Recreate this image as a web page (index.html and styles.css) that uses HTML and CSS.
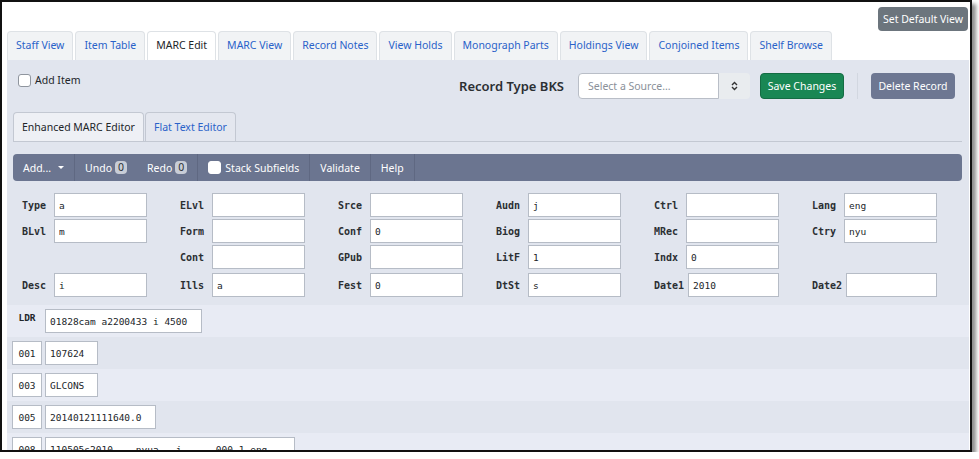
FILE: index.html
```html
<!DOCTYPE html>
<html lang="en">
<head>
    <meta charset="UTF-8">
    <title>MARC Edit</title>
    <link rel="stylesheet" href="styles.css">
</head>
<body>
<div class="frame">
    <div class="topbar">
        <button class="btn btn-grey">Set Default View</button>
    </div>

    <div class="tabs">
        <div class="tab">Staff View</div>
        <div class="tab">Item Table</div>
        <div class="tab active">MARC Edit</div>
        <div class="tab">MARC View</div>
        <div class="tab">Record Notes</div>
        <div class="tab">View Holds</div>
        <div class="tab">Monograph Parts</div>
        <div class="tab">Holdings View</div>
        <div class="tab">Conjoined Items</div>
        <div class="tab">Shelf Browse</div>
    </div>

    <div class="panel">
        <div class="panel-head">
            <label class="check"><input type="checkbox"> Add Item</label>
            <div class="head-right">
                <span class="rec-type">Record Type BKS</span>
                <div class="source">
                    <input type="text" placeholder="Select a Source...">
                    <span class="source-arrows">
                        <svg width="7" height="10" viewBox="0 0 7 10"><path d="M1 4 L3.5 1.5 L6 4 M1 6 L3.5 8.5 L6 6" fill="none" stroke="#333" stroke-width="1.4"/></svg>
                    </span>
                </div>
                <button class="btn btn-green">Save Changes</button>
                <span class="vsep"></span>
                <button class="btn btn-slate">Delete Record</button>
            </div>
        </div>

        <div class="editor">
            <div class="subtabs">
                <div class="subtab active">Enhanced MARC Editor</div>
                <div class="subtab">Flat Text Editor</div>
            </div>

            <div class="toolbar">
                <div class="tool">Add... <span class="caret"></span></div>
                <div class="tool plain">Undo <span class="badge">0</span></div>
                <div class="tool">Redo <span class="badge">0</span></div>
                <div class="tool"><input type="checkbox" class="tb-check"> Stack Subfields</div>
                <div class="tool">Validate</div>
                <div class="tool">Help</div>
            </div>

            <div class="ff">
                <div class="ff-row">
                    <div class="ff-cell"><span>Type</span><input value="a"></div>
                    <div class="ff-cell"><span>ELvl</span><input value=""></div>
                    <div class="ff-cell"><span>Srce</span><input value=""></div>
                    <div class="ff-cell"><span>Audn</span><input value="j"></div>
                    <div class="ff-cell"><span>Ctrl</span><input value=""></div>
                    <div class="ff-cell"><span>Lang</span><input value="eng"></div>
                </div>
                <div class="ff-row">
                    <div class="ff-cell"><span>BLvl</span><input value="m"></div>
                    <div class="ff-cell"><span>Form</span><input value=""></div>
                    <div class="ff-cell"><span>Conf</span><input value="0"></div>
                    <div class="ff-cell"><span>Biog</span><input value=""></div>
                    <div class="ff-cell"><span>MRec</span><input value=""></div>
                    <div class="ff-cell"><span>Ctry</span><input value="nyu"></div>
                </div>
                <div class="ff-row">
                    <div class="ff-cell"></div>
                    <div class="ff-cell"><span>Cont</span><input value=""></div>
                    <div class="ff-cell"><span>GPub</span><input value=""></div>
                    <div class="ff-cell"><span>LitF</span><input value="1"></div>
                    <div class="ff-cell"><span>Indx</span><input value="0"></div>
                    <div class="ff-cell"></div>
                </div>
                <div class="ff-row last">
                    <div class="ff-cell"><span>Desc</span><input value="i"></div>
                    <div class="ff-cell"><span>Ills</span><input value="a"></div>
                    <div class="ff-cell"><span>Fest</span><input value="0"></div>
                    <div class="ff-cell"><span>DtSt</span><input value="s"></div>
                    <div class="ff-cell"><span>Date1</span><input value="2010"></div>
                    <div class="ff-cell"><span>Date2</span><input value=""></div>
                </div>
            </div>
        </div>

        <div class="records">
            <div class="rec">
                <span class="tag-label">LDR</span>
                <input class="val w-ldr" value="01828cam a2200433 i 4500">
            </div>
            <div class="rec">
                <input class="tag" value="001">
                <input class="val w-sm" value="107624">
            </div>
            <div class="rec">
                <input class="tag" value="003">
                <input class="val w-sm" value="GLCONS">
            </div>
            <div class="rec">
                <input class="tag" value="005">
                <input class="val w-md" value="20140121111640.0">
            </div>
            <div class="rec">
                <input class="tag" value="008">
                <input class="val w-lg" value="110505s2010    nyua   j      000 1 eng  ">
            </div>
        </div>
    </div>
</div>
</body>
</html>
```

FILE: styles.css
```css
body {
    margin: 0;
    background-color: #fff;
    font-family: "Noto Sans", sans-serif;
    font-size: 10.5px;
    color: #212529;
}
.frame {
    box-sizing: border-box;
    width: 972px;
    height: 452px;
    border: 2px solid #111;
    padding: 0 1px 0 5px;
    background-color: #fff;
    box-shadow: 4px 4px 4px rgba(0, 0, 0, 0.45);
    overflow: hidden;
}
.topbar {
    display: flex;
    justify-content: flex-end;
    height: 29px;
    padding-top: 5px;
    box-sizing: border-box;
}
.btn {
    font-family: inherit;
    font-size: 10.5px;
    color: #fff;
    border: 1px solid transparent;
    border-radius: 4px;
    cursor: pointer;
    padding: 0 4px;
    white-space: nowrap;
}
.btn-grey {
    background-color: #6c757d;
    height: 24px;
    margin-right: 1px;
}
.btn-green {
    background-color: #198754;
    border-color: #146c43;
    height: 26px;
    width: 84px;
    margin-left: 10px;
}
.btn-slate {
    background-color: #6d7792;
    height: 26px;
    width: 84px;
}
.tabs {
    display: flex;
    gap: 2px;
    height: 29px;
}
.tab {
    padding: 0 8px;
    line-height: 27px;
    background-color: #f1f3f5;
    border: 1px solid #dee2e6;
    border-bottom: none;
    border-radius: 4px 4px 0 0;
    color: #2a62c9;
}
.tab.active {
    background-color: #fff;
    color: #212529;
}
.panel {
    background-color: #e1e5ee;
    height: 400px;
}
.panel-head {
    display: flex;
    justify-content: space-between;
    align-items: flex-start;
    padding: 13px 14px 0 11px;
}
.check {
    display: flex;
    align-items: center;
    gap: 4px;
}
.check input, .tb-check {
    appearance: none;
    width: 13px;
    height: 13px;
    margin: 0;
    border: 1px solid #8f959e;
    border-radius: 3px;
    background-color: #fff;
}
.head-right {
    display: flex;
    align-items: center;
}
.rec-type {
    font-size: 13px;
    font-weight: 600;
    color: #2b2f33;
    margin-right: 14px;
}
.source {
    display: flex;
    height: 26px;
}
.source input {
    box-sizing: border-box;
    width: 141px;
    height: 26px;
    border: 1px solid #b9bec7;
    border-radius: 4px 0 0 4px;
    padding: 0 9px;
    font-family: inherit;
    font-size: 10.5px;
    outline: none;
}
.source input::placeholder {
    color: #8a9099;
}
.source-arrows {
    width: 31px;
    display: flex;
    align-items: center;
    justify-content: center;
    background-color: #e9ecef;
    border-radius: 0 4px 4px 0;
}
.vsep {
    width: 1px;
    height: 26px;
    background-color: #d2d7e0;
    margin: 0 13px;
}
.editor {
    padding: 0 7px 0 6px;
}
.subtabs {
    display: flex;
    gap: 1px;
    margin-top: 13px;
    height: 29px;
    border-bottom: 1px solid #c3c8d2;
}
.subtab {
    padding: 0 8px;
    line-height: 28px;
    border: 1px solid #c3c8d2;
    border-bottom: none;
    border-radius: 4px 4px 0 0;
    color: #2a62c9;
    background-color: #e4e7ef;
}
.subtab.active {
    background-color: #eef0f5;
    color: #212529;
}
.toolbar {
    display: flex;
    align-items: center;
    height: 27px;
    margin-top: 12px;
    background-color: #6b7590;
    border-radius: 4px;
    color: #fff;
}
.tool {
    display: flex;
    align-items: center;
    gap: 3px;
    height: 27px;
    padding: 0 10px;
    border-right: 1px solid #5f6882;
}
.tool.plain {
    border-right: none;
}
.tb-check {
    border-color: #fff;
    margin-right: 1px;
}
.caret {
    width: 0;
    height: 0;
    margin-left: 4px;
    border-left: 3px solid transparent;
    border-right: 3px solid transparent;
    border-top: 3px solid #fff;
}
.badge {
    background-color: #c8cdd7;
    color: #2b2f33;
    border-radius: 4px;
    padding: 0 3px;
    line-height: 13px;
}
.ff {
    display: flex;
    flex-direction: column;
    gap: 2px;
    margin-top: 12px;
    padding-left: 9px;
}
.ff-row {
    display: grid;
    grid-template-columns: repeat(6, 125px);
    column-gap: 33px;
}
.ff-row.last {
    margin-top: 2px;
}
.ff-cell {
    display: flex;
    align-items: center;
    height: 24px;
}
.ff-cell span {
    box-sizing: border-box;
    min-width: 32px;
    padding-right: 4px;
    font-family: "DejaVu Sans Mono", monospace;
    font-size: 10px;
    font-weight: bold;
    color: #2b2f33;
}
.ff-cell input, .rec input {
    box-sizing: border-box;
    height: 24px;
    border: 1px solid #b6bcc6;
    background-color: #fff;
    font-family: "DejaVu Sans Mono", monospace;
    font-size: 9.5px;
    color: #212529;
    padding: 0 4px;
    outline: none;
}
.ff-cell input {
    flex: 1;
    min-width: 0;
}
.records {
    margin-top: 8px;
}
.rec {
    display: flex;
    align-items: flex-start;
    gap: 3px;
    height: 32px;
    padding: 4px 5px 0;
    box-sizing: border-box;
    background-color: #e1e5ee;
}
.rec:nth-child(odd) {
    background-color: #e8ebf4;
}
.tag-label {
    width: 30px;
    text-align: center;
    padding-top: 3px;
    font-family: "DejaVu Sans Mono", monospace;
    font-size: 9.5px;
    font-weight: bold;
}
.rec input.tag {
    width: 30px;
    text-align: center;
    padding: 0;
}
.w-sm { width: 53px; }
.w-md { width: 111px; }
.w-ldr { width: 157px; }
.w-lg { width: 250px; }
```
